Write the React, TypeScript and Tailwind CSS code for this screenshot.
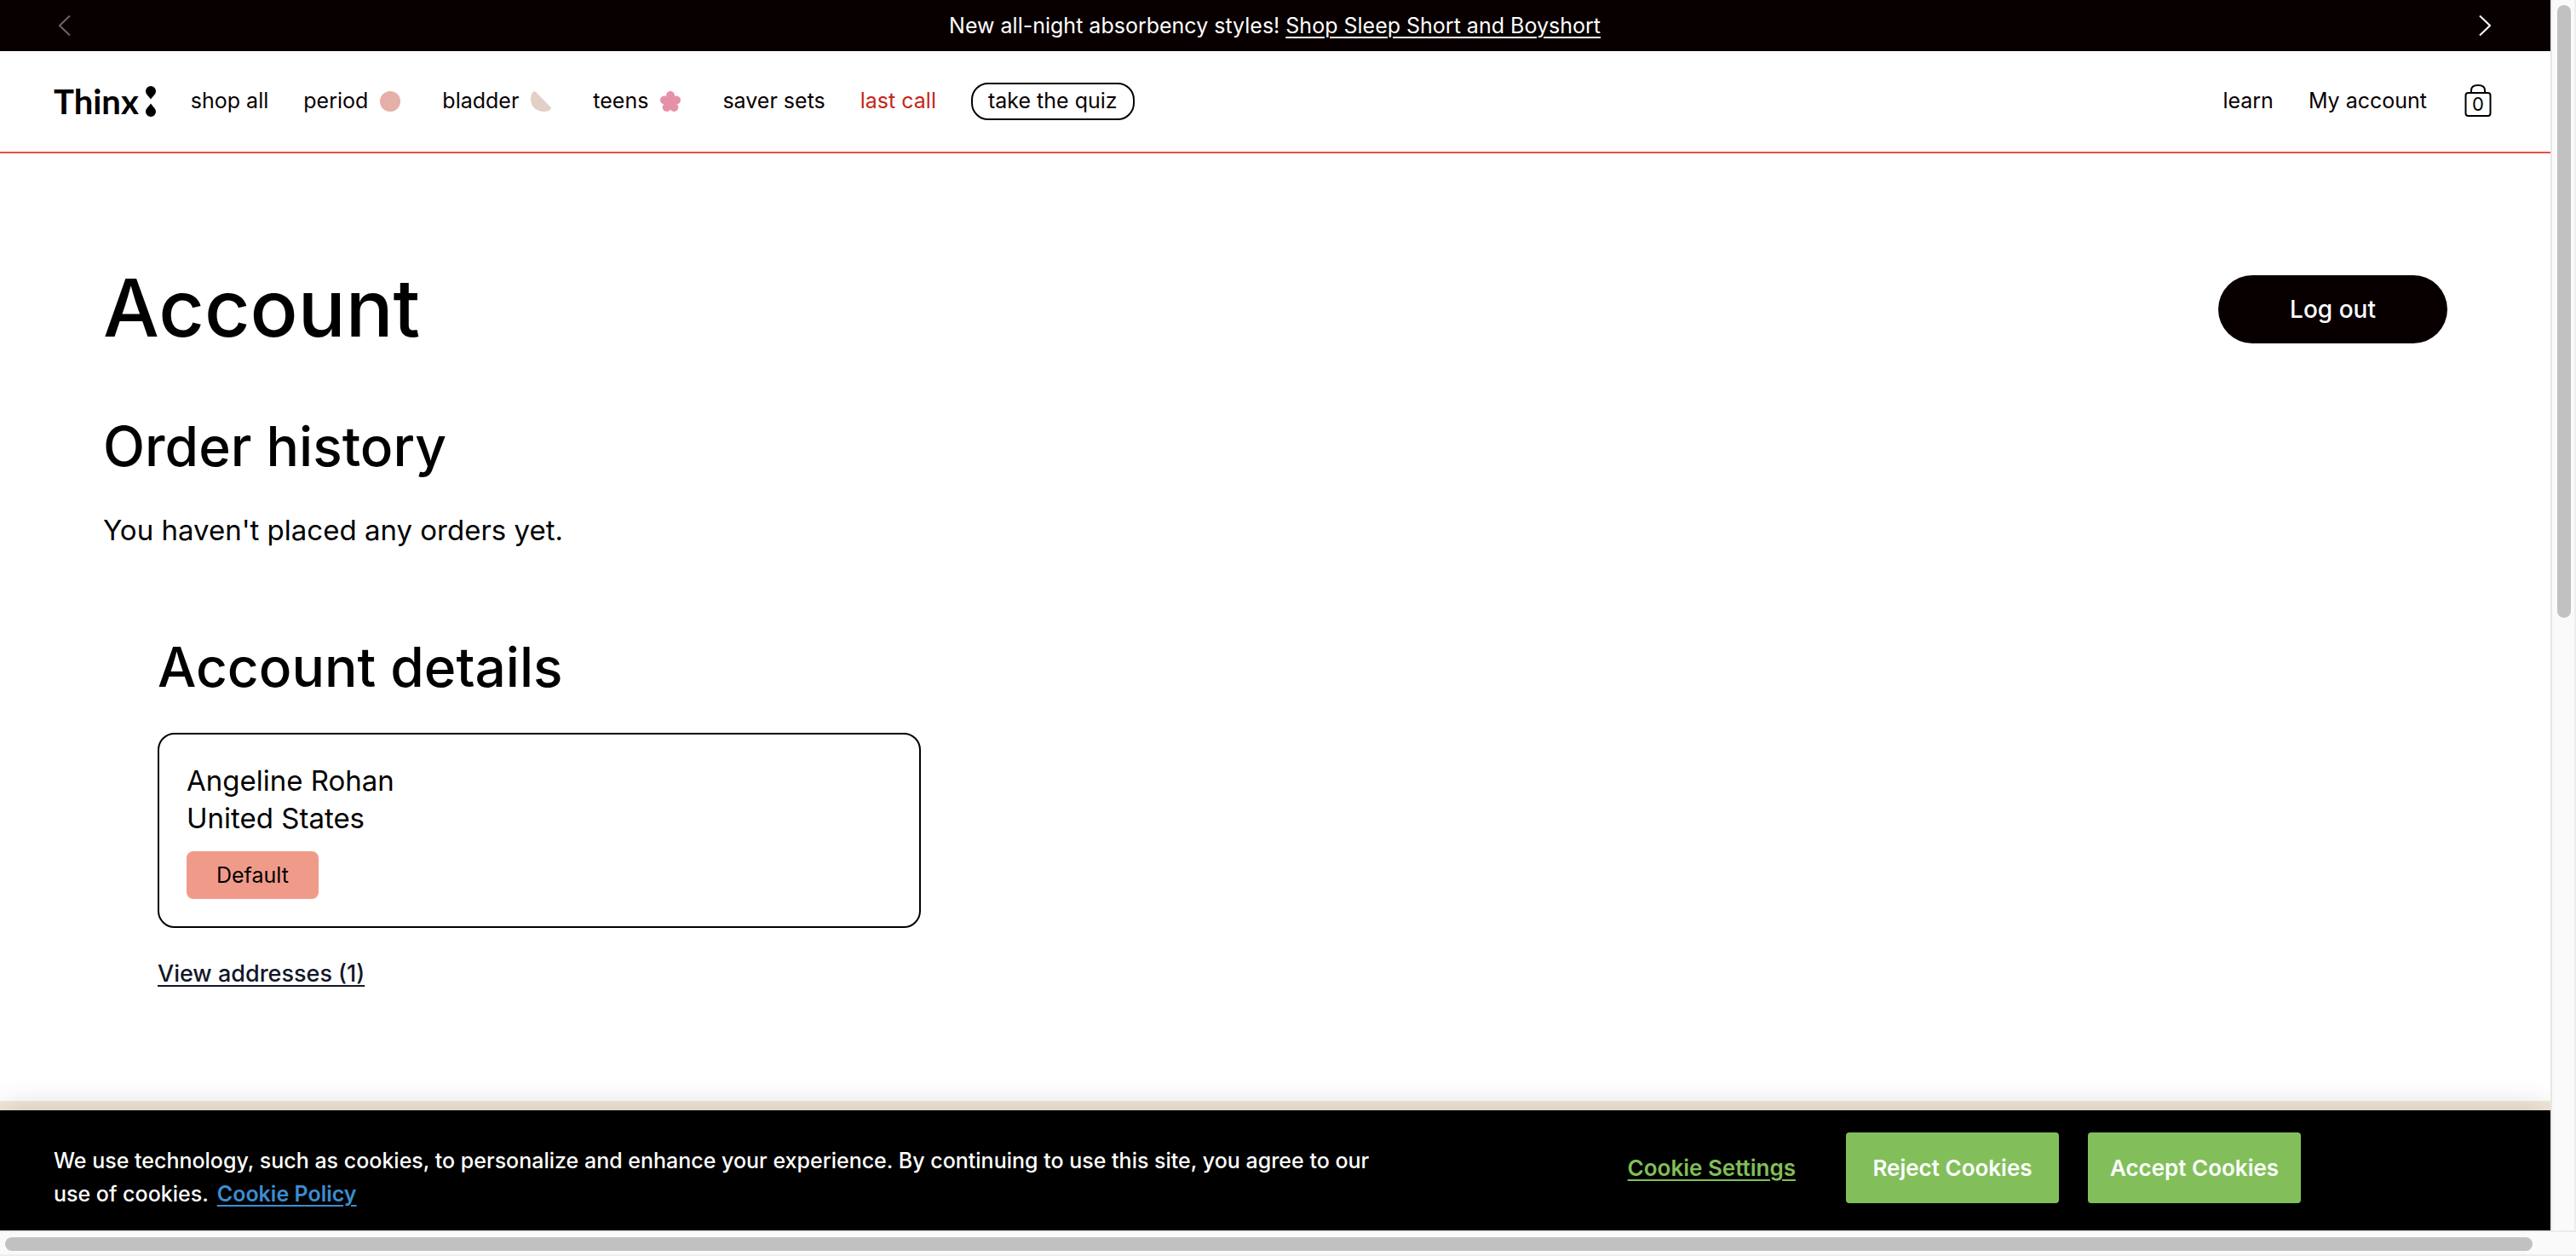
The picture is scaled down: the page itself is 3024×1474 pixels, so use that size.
import type { ReactNode } from "react";

function DropsMark() {
  return (
    <svg className="h-9 w-3 shrink-0" viewBox="0 0 12 36" fill="#000" aria-hidden="true">
      <path d="M6 0a6 6 0 0 1 6 6c0 3.600-3.600 6-6 9.600C3.600 12 0 9.600 0 6a6 6 0 0 1 6-6Z" />
      <path d="M6 36a6 6 0 0 0 6-6c0-3.600-3.600-6-6-9.600C3.600 24 0 26.400 0 30a6 6 0 0 0 6 6Z" />
    </svg>
  );
}

function CircleIcon() {
  return (
    <svg className="mr-2 ml-3.5 size-6" viewBox="0 0 24 24" aria-hidden="true">
      <circle cx="12" cy="12" r="12" fill="#e4b0a7" />
    </svg>
  );
}

function HalfMoonIcon() {
  return (
    <svg className="mr-2 ml-3.5 size-6" viewBox="0 0 24 24" aria-hidden="true">
      <path
        d="M2.600 1C3.800-.3 5 0 6 1l17 17.200c1.300 1.300 1.300 2.300.2 3.200C21 23.200 18 24 14.800 24 6.300 24 0 17.600 0 9.600 0 6 .9 3 2.600 1Z"
        fill="#e1d0c8"
      />
    </svg>
  );
}

function FlowerIcon() {
  return (
    <svg className="mr-2 ml-3.5 size-6" viewBox="0 0 24 24" fill="#e591a9" aria-hidden="true">
      <circle cx="12" cy="5" r="5" />
      <circle cx="5" cy="10.500" r="5" />
      <circle cx="19" cy="10.500" r="5" />
      <circle cx="7.700" cy="19" r="5" />
      <circle cx="16.300" cy="19" r="5" />
      <circle cx="12" cy="13" r="6" />
    </svg>
  );
}

function Bag() {
  return (
    <a href="#cart" aria-label="Cart, 0 items" className="ml-11 block">
      <svg className="h-10 w-8" viewBox="0 0 32 40" fill="none" stroke="#000" strokeWidth="2" aria-hidden="true">
        <rect x="1.500" y="10" width="29" height="27" rx="3" />
        <path d="M8 10V7c0-4 3-6 8-6s8 2 8 6v3" />
        <text x="16" y="31" textAnchor="middle" fontSize="22" fill="#000" stroke="none">
          0
        </text>
      </svg>
    </a>
  );
}

function NavLink({ children, className = "" }: { children: ReactNode; className?: string }) {
  return (
    <a href="#nav" className={`flex items-center whitespace-nowrap ${className}`}>
      {children}
    </a>
  );
}

function Announcement() {
  return (
    <div className="flex h-[60px] shrink-0 items-center justify-between bg-[#080000] pr-[70px] pl-[69px] text-[25px] text-white">
      <button type="button" aria-label="Previous announcement">
        <svg className="h-6 w-3.5" viewBox="0 0 14 24" fill="none" stroke="#6b6666" strokeWidth="2" aria-hidden="true">
          <path d="M13 .5 1 12l12 11.500" />
        </svg>
      </button>
      <p className="leading-[30px]">
        New all-night absorbency styles!{" "}
        <a href="#sleep" className="underline decoration-2 underline-offset-4">
          Shop Sleep Short and Boyshort
        </a>
      </p>
      <button type="button" aria-label="Next announcement">
        <svg className="h-6 w-3.5" viewBox="0 0 14 24" fill="none" stroke="#fff" strokeWidth="2" aria-hidden="true">
          <path d="m1 .5 12 11.500L1 23.500" />
        </svg>
      </button>
    </div>
  );
}

function Header() {
  return (
    <header className="flex h-[120px] shrink-0 items-center justify-between border-b-2 border-[#e95143] pr-[69px] pl-[63px] text-[25px] text-[#080000]">
      <nav className="flex items-center gap-[41px]">
        <a href="#home" className="flex items-center gap-2 font-[Lato] text-[40px] leading-[44px] font-bold text-black">
          Thinx
          <DropsMark />
        </a>
        <NavLink>shop all</NavLink>
        <NavLink>
          period
          <CircleIcon />
        </NavLink>
        <NavLink>
          bladder
          <HalfMoonIcon />
        </NavLink>
        <NavLink>
          teens
          <FlowerIcon />
        </NavLink>
        <NavLink>saver sets</NavLink>
        <NavLink className="text-[#c6261b]">last call</NavLink>
        <NavLink className="h-11 rounded-[20px] border-2 border-[#080000] px-[18px]">take the quiz</NavLink>
      </nav>
      <nav className="flex items-center">
        <NavLink className="mr-[41px]">learn</NavLink>
        <NavLink>My account</NavLink>
        <Bag />
      </nav>
    </header>
  );
}

function Account() {
  return (
    <main className="min-h-0 flex-1 px-[121px] pt-[143px]">
      <div className="flex items-start justify-between">
        <h1 className="text-[93px] leading-[76px] font-medium">Account</h1>
        <button type="button" className="h-20 w-[269px] rounded-full bg-[#080000] text-[28px] font-medium text-white">
          Log out
        </button>
      </div>
      <section className="mt-[89px]">
        <h2 className="text-[64px] leading-[64px] font-medium">Order history</h2>
        <p className="mt-11 text-[33px] leading-[44px]">You haven't placed any orders yet.</p>
      </section>
      <section className="mt-[107px] ml-16">
        <h2 className="text-[64px] leading-[64px] font-medium">Account details</h2>
        <div className="mt-[45px] w-full max-w-[896px] rounded-[20px] border-2 border-black px-8 py-8 text-[33px] leading-[44px]">
          <p>Angeline Rohan</p>
          <p>United States</p>
          <span className="mt-[17px] flex h-14 w-fit items-center rounded-lg bg-[#f09b8a] px-[35px] text-[25px]">
            Default
          </span>
        </div>
        <a
          href="#addresses"
          className="mt-[34px] block w-fit text-[27px] leading-10 font-medium text-[#121729] underline decoration-2 underline-offset-4"
        >
          View addresses (1)
        </a>
      </section>
    </main>
  );
}

function CookieBanner() {
  return (
    <section
      aria-label="Cookie consent"
      className="flex h-[141px] shrink-0 items-center justify-between bg-black pr-[293px] pb-[7px] pl-[63px] text-white shadow-[0_0_36px_rgba(0,0,0,0.2)]"
    >
      <p className="max-w-[1580px] pt-6 text-[25px] leading-[39px] font-medium">
        We use technology, such as cookies, to personalize and enhance your experience. By continuing to use this
        site, you agree to our use of cookies.
        <a href="#policy" className="ml-2.5 font-semibold text-[#3d8ccf] underline decoration-2 underline-offset-4">
          Cookie Policy
        </a>
      </p>
      <div className="flex shrink-0 items-center text-[26px] font-semibold">
        <button type="button" className="mr-[59px] text-[#80bf59] underline decoration-2 underline-offset-4">
          Cookie Settings
        </button>
        <button type="button" className="mr-[34px] h-[83px] w-[250px] rounded-[4px] bg-[#82bf5b]">
          Reject Cookies
        </button>
        <button type="button" className="h-[83px] w-[250px] rounded-[4px] bg-[#82bf5b]">
          Accept Cookies
        </button>
      </div>
    </section>
  );
}

export default function App() {
  return (
    <div className="flex h-screen flex-col overflow-hidden bg-white font-[Inter,sans-serif] text-black">
      <div className="flex min-h-0 flex-1">
        <div className="flex min-w-0 flex-1 flex-col overflow-hidden">
          <Announcement />
          <Header />
          <Account />
          <div className="h-[11px] shrink-0 bg-[#f5ebdb]" />
          <CookieBanner />
        </div>
        <div className="flex w-[30px] shrink-0 flex-col border-r-2 border-l-2 border-r-[#ededed] border-l-[#e6e6e6] bg-[#fafafa] pt-1.5 pr-1 pl-1.5">
          <div className="h-1/2 rounded-full bg-[#c1c1c1]" />
        </div>
      </div>
      <div className="h-[30px] shrink-0 border-t-2 border-b-2 border-t-[#ebebeb] border-b-[#ededed] bg-[#fafafa] pt-1.5 pr-[51px] pl-1.5">
        <div className="h-4 rounded-full bg-[#c1c1c1]" />
      </div>
    </div>
  );
}
